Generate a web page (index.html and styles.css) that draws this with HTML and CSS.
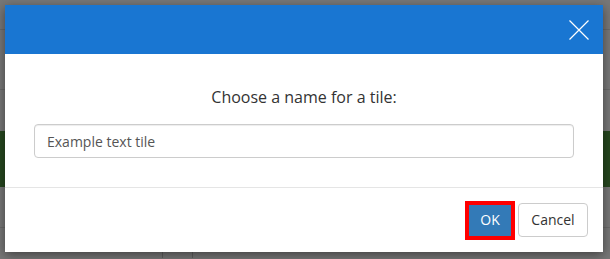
FILE: index.html
```html
<!DOCTYPE html>
<html>
<head>
<meta charset="utf-8">
<link rel="stylesheet" href="styles.css">
</head>
<body>
<div class="page">
  <div class="row r1"></div>
  <div class="row r2"></div>
  <div class="row r3"></div>
  <div class="band"></div>
  <div class="row r4"></div>
  <div class="cols">
    <div class="col c1"></div>
    <div class="col c2"></div>
    <div class="col c3"></div>
  </div>
</div>
<div class="modal">
  <div class="modal-header">
    <button class="close" aria-label="Close">
      <svg width="20" height="20" viewBox="0 0 20 20"><path d="M0.5 0.5 L19.5 19.5 M19.5 0.5 L0.5 19.5" stroke="#fff" stroke-width="1.2" fill="none"/></svg>
    </button>
  </div>
  <div class="modal-body">
    <div class="title">Choose a name for a tile:</div>
    <input class="field" type="text" value="Example text tile">
  </div>
  <div class="modal-footer">
    <button class="btn btn-ok">OK</button>
    <button class="btn btn-cancel">Cancel</button>
  </div>
</div>
</body>
</html>
```
FILE: styles.css
```css
html, body {
  margin: 0;
  padding: 0;
}
body {
  width: 610px;
  height: 259px;
  overflow: hidden;
  background: #777777;
  font-family: "Open Sans", "Liberation Sans", sans-serif;
  position: relative;
}
.page {
  display: flex;
  flex-direction: column;
}
.row {
  border-bottom: 1px solid #6a6a6a;
}
.r1 { height: 29px; }
.r2 { height: 59px; }
.r3 { height: 41px; border-bottom: none; }
.band {
  height: 56px;
  background: #26471f;
}
.r4 { height: 40px; }
.cols {
  display: flex;
  height: 30px;
}
.col { border-right: 1px solid #5e5e5e; }
.c1 { width: 162px; }
.c2 { width: 29px; }
.c3 { flex: 1; border-right: none; }

.modal {
  position: absolute;
  left: 5px;
  top: 5px;
  width: 598px;
  height: 247px;
  background: #fff;
  box-shadow: 0 3px 10px rgba(0, 0, 0, 0.45);
  display: flex;
  flex-direction: column;
}
.modal-header {
  flex: 0 0 49px;
  background: #1976d2;
  display: flex;
  justify-content: flex-end;
  align-items: flex-start;
  padding: 15px 14px 0 0;
  box-sizing: border-box;
}
.close {
  border: none;
  background: none;
  padding: 0;
  width: 20px;
  height: 20px;
  display: block;
}
.close svg { display: block; }
.modal-body {
  flex: 0 0 133px;
  padding: 32px 29px 0;
  box-sizing: border-box;
  display: flex;
  flex-direction: column;
}
.title {
  text-align: center;
  font-size: 16px;
  line-height: 22px;
  color: #333;
  margin-bottom: 16px;
}
.field {
  height: 34px;
  box-sizing: border-box;
  border: 1px solid #cccccc;
  border-radius: 4px;
  padding: 0 12px;
  font-family: "Open Sans", "Liberation Sans", sans-serif;
  font-size: 14px;
  color: #555;
  width: 100%;
  outline: none;
  box-shadow: inset 0 1px 1px rgba(0,0,0,0.075);
}
.modal-footer {
  flex: 0 0 65px;
  box-sizing: border-box;
  border-top: 1px solid #e5e5e5;
  padding: 0 15px;
  display: flex;
  justify-content: flex-end;
  align-items: center;
  gap: 3px;
}
.btn {
  font-family: "Open Sans", "Liberation Sans", sans-serif;
  font-size: 14px;
  line-height: 20px;
  box-sizing: border-box;
  padding: 0;
}
.btn-ok {
  width: 50px;
  height: 39px;
  border: 4px solid #ff0000;
  background: #337ab7;
  color: #fff;
}
.btn-cancel {
  width: 70px;
  height: 34px;
  border: 1px solid #cccccc;
  border-radius: 4px;
  background: #fff;
  color: #333;
}
```
